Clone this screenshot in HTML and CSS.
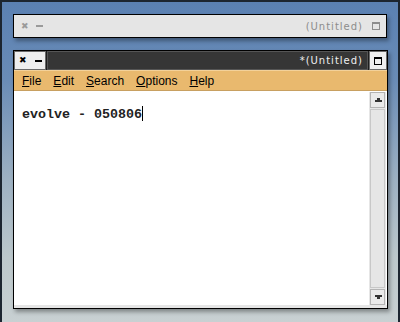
FILE: index.html
```html
<html>

<head>
  <meta charset="UTF-8">
  <title>(Untitled)</title>
  <link rel="stylesheet" href="styles.css">
</head>

<body>
  <div class="desktop">

    <div class="janela inativa">
      <div class="botoes">
        <span class="x">&#x2716;</span>
        <span class="menos"></span>
      </div>
      <div class="titulo">(Untitled)</div>
      <span class="max"></span>
    </div>

    <div class="janela ativa">
      <div class="barra">
        <div class="botoes">
          <span class="x">&#x2716;</span>
          <span class="menos"></span>
        </div>
        <div class="titulo">*(Untitled)</div>
        <div class="maxbox"><span class="max"></span></div>
      </div>
      <div class="menu">
        <span><u>F</u>ile</span>
        <span><u>E</u>dit</span>
        <span><u>S</u>earch</span>
        <span><u>O</u>ptions</span>
        <span><u>H</u>elp</span>
      </div>
      <div class="corpo">
        <div class="texto">evolve - 050806<span class="cursor"></span></div>
        <div class="scroll">
          <div class="seta cima"></div>
          <div class="trilho"></div>
          <div class="seta baixo"></div>
        </div>
      </div>
      <div class="rodape"></div>
    </div>

  </div>
</body>

</html>
```

FILE: styles.css
```css
body {
  margin: 0;
  width: 400px;
  height: 322px;
  box-sizing: border-box;
  border: 2px solid #1c2530;
  border-bottom-width: 0;
  background: linear-gradient(to bottom, #5a80b2 0%, #6a8cb6 25%, #9cb0c2 55%, #bcc8cc 80%, #c8d0d2 100%);
  overflow: hidden;
  font-family: "Liberation Sans", Arial, sans-serif;
}

.desktop {
  padding: 12px 0 0 11px;
}

.janela {
  border: 1px solid #000000;
  box-sizing: border-box;
  box-shadow: 2px 3px 4px rgba(0, 0, 0, 0.35);
}

/* janela de cima, sem foco */
.inativa {
  width: 374px;
  height: 24px;
  background: #e5e5e5;
  display: flex;
  align-items: center;
  padding: 0 6px 0 7px;
}

.inativa .botoes {
  color: #9a9a9a;
}

.inativa .titulo {
  flex: 1;
  text-align: right;
  color: #8c8c8c;
  padding-right: 9px;
}

.inativa .max {
  border-color: #8c8c8c;
}

.botoes {
  display: flex;
  align-items: center;
  gap: 6px;
}

.x {
  font-size: 9px;
  line-height: 9px;
  width: 9px;
  font-family: "DejaVu Sans", sans-serif;
}

.menos {
  display: block;
  width: 7px;
  height: 2px;
  background: currentColor;
}

.titulo {
  font-family: "DejaVu Sans", sans-serif;
  font-size: 10px;
  letter-spacing: 1px;
}

.max {
  display: block;
  width: 6px;
  height: 5px;
  border: 1px solid #000000;
  border-top-width: 2px;
}

/* janela ativa */
.ativa {
  margin-top: 12px;
  width: 375px;
  height: 259px;
  background: #e6e6e6;
  display: flex;
  flex-direction: column;
}

.barra {
  height: 19px;
  display: flex;
  background: #1e1e1e;
}

.ativa .botoes {
  background: #eeeeee;
  border: 1px solid #6a6a6a;
  width: 32px;
  box-sizing: border-box;
  padding-left: 4px;
  color: #000000;
  gap: 7px;
}

.ativa .titulo {
  flex: 1;
  margin: 0 1px;
  background: #363636;
  border: 1px solid #555555;
  color: #f0f0f0;
  text-align: right;
  line-height: 17px;
  padding-right: 4px;
}

.maxbox {
  width: 18px;
  background: #eeeeee;
  border: 1px solid #6a6a6a;
  box-sizing: border-box;
  display: flex;
  align-items: center;
  justify-content: center;
}

.menu {
  height: 19px;
  background: #e9b96e;
  border-top: 1px solid #f3d199;
  border-bottom: 1px solid #c8a061;
  display: flex;
  align-items: center;
  padding-left: 2px;
  font-size: 12px;
  color: #000000;
}

.menu span {
  padding: 0 6px;
}

.corpo {
  flex: 1;
  display: flex;
  background: #ffffff;
}

.texto {
  flex: 1;
  padding: 15px 0 0 8px;
  font-family: "Liberation Mono", "Courier New", monospace;
  font-weight: bold;
  font-size: 13.33px;
  line-height: 16px;
  color: #222222;
}

.cursor {
  display: inline-block;
  width: 1px;
  height: 15px;
  background: #000000;
  vertical-align: -3px;
}

.scroll {
  width: 15px;
  margin: 1px 1px 0 0;
  background: #e6e6e6;
  padding: 0 1px;
  display: flex;
  flex-direction: column;
}

.seta {
  height: 14px;
  border: 1px solid #b4b4b4;
  background: #eaeaea;
  position: relative;
}

.seta::before {
  content: "";
  position: absolute;
  left: 4px;
  width: 7px;
  height: 2px;
  background: #333333;
}

.seta::after {
  content: "";
  position: absolute;
  left: 6px;
  width: 3px;
  height: 2px;
  background: #333333;
}

.cima::after { top: 5px; }
.cima::before { top: 7px; }
.baixo::before { top: 5px; }
.baixo::after { top: 7px; }

.trilho {
  flex: 1;
  margin: 1px 0;
  border: 1px solid #c8c8c8;
  background: #e6e6e6;
}

.rodape {
  height: 3px;
  background: #e6e6e6;
}
```
